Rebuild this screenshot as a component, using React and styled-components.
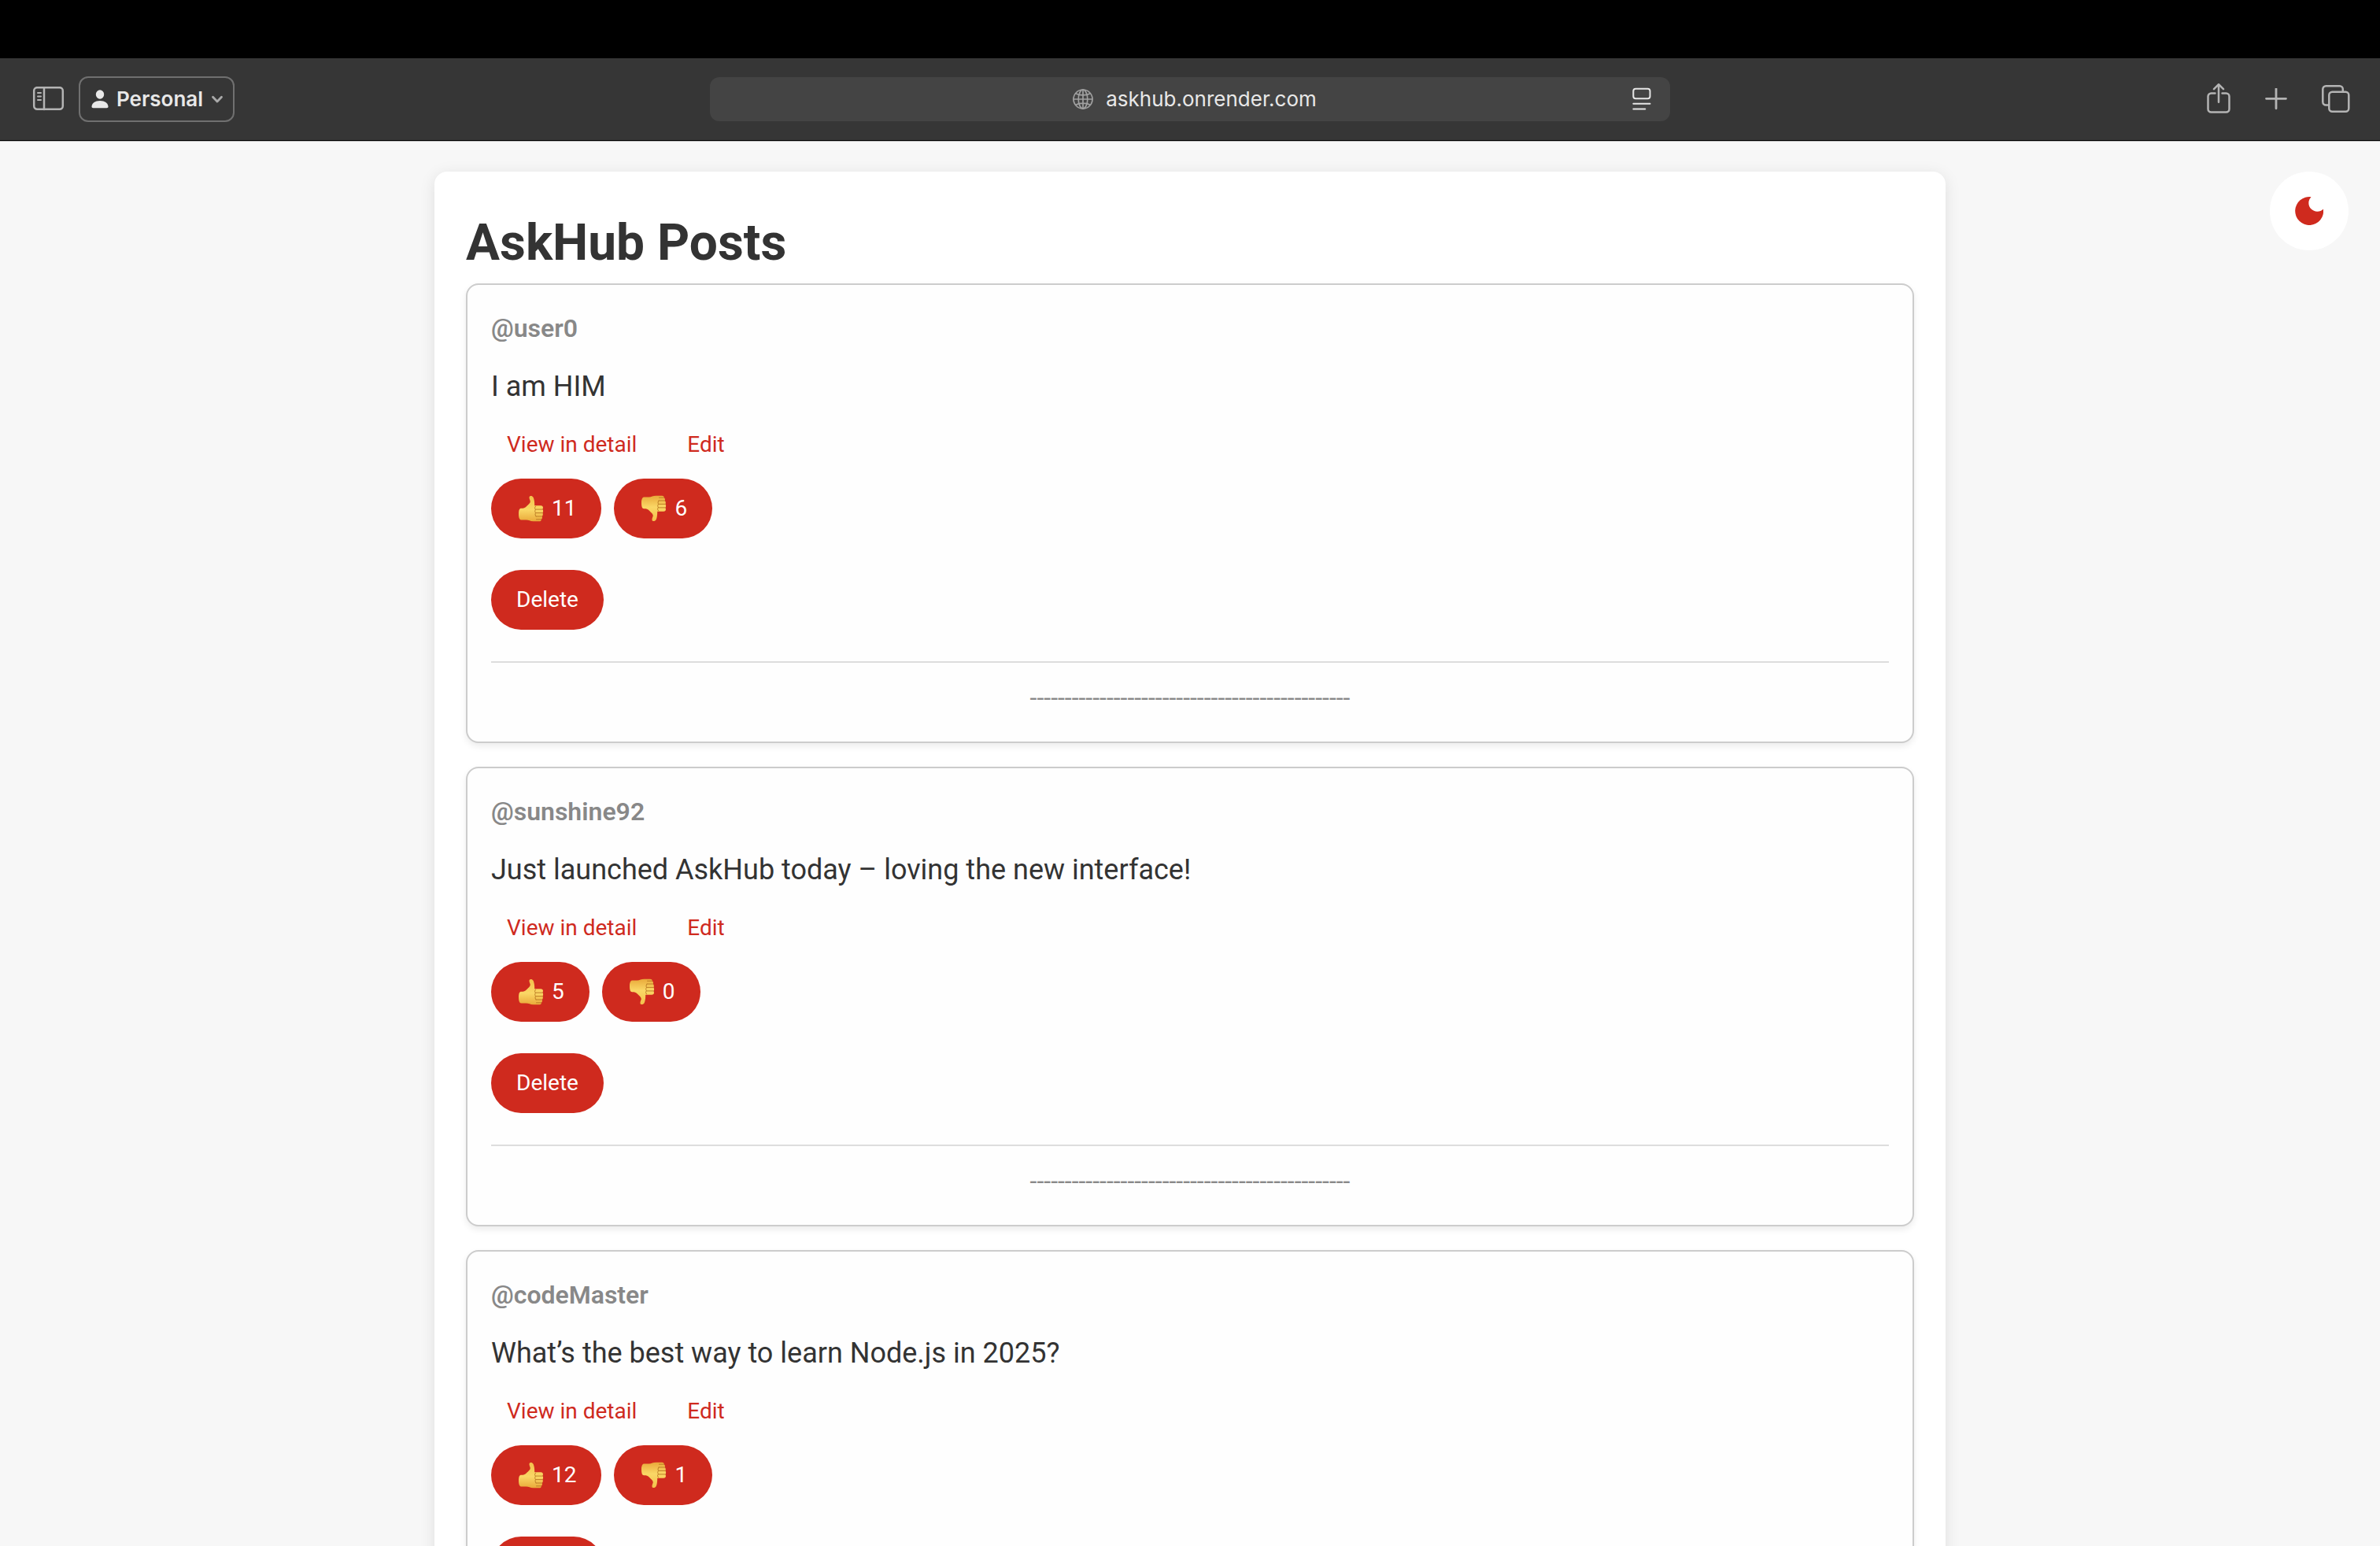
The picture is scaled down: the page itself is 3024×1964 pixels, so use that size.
import React from "react";
import styled, { createGlobalStyle } from "styled-components";

const GlobalStyle = createGlobalStyle`
  *, *::before, *::after { box-sizing: border-box; }
  body {
    margin: 0;
    background: #f7f7f7;
    color: #333;
    font-family: Roboto, "Liberation Sans", sans-serif;
    font-size: 32px;
    line-height: 1.6;
  }
`;

const Browser = styled.div`
  display: flex;
  flex-direction: column;
  height: 100vh;
  overflow: hidden;
`;

const MenuStrip = styled.div`
  flex: none;
  height: 74px;
  background: #000;
`;

const Toolbar = styled.header`
  flex: none;
  display: grid;
  grid-template-columns: 1fr minmax(0, 1220px) 1fr;
  align-items: center;
  height: 105px;
  padding: 0 38px;
  background: #363636;
  border-bottom: 1px solid #000;
  font-family: Inter, "Liberation Sans", sans-serif;
`;

const ToolGroup = styled.div`
  display: flex;
  align-items: center;
  gap: ${(p) => p.$gap}px;
  justify-content: ${(p) => (p.$end ? "flex-end" : "flex-start")};
`;

const IconButton = styled.button`
  display: flex;
  padding: 0;
  border: 0;
  background: none;
  color: ${(p) => (p.$bright ? "#e6e6e6" : "#b4b4b4")};
`;

const ProfileButton = styled.button`
  display: flex;
  align-items: center;
  gap: 10px;
  height: 58px;
  padding: 0 12px 0 14px;
  border: 2px solid #707070;
  border-radius: 12px;
  background: none;
  color: #e8e8e8;
  font: 600 26px/32px Inter, "Liberation Sans", sans-serif;
`;

const AddressBar = styled.div`
  display: flex;
  align-items: center;
  height: 56px;
  padding: 0 24px 0 60px;
  border-radius: 12px;
  background: #444;
  color: #a0a0a0;
`;

const Address = styled.label`
  flex: 1;
  display: flex;
  align-items: center;
  justify-content: center;
  gap: 16px;
`;

const AddressInput = styled.input`
  field-sizing: content;
  padding: 0;
  border: 0;
  outline: 0;
  background: none;
  color: #e8e8e8;
  font: 400 26px/32px Inter, "Liberation Sans", sans-serif;
`;

const Viewport = styled.div`
  position: relative;
  flex: 1;
  min-height: 0;
  border-top: 1px solid #c4c4c4;
`;

const Scroller = styled.div`
  height: 100%;
  padding: 38px 40px;
  overflow-y: auto;
  scrollbar-width: none;
`;

const ThemeToggle = styled.button`
  position: absolute;
  top: 38px;
  right: 40px;
  display: flex;
  align-items: center;
  justify-content: center;
  width: 100px;
  height: 100px;
  padding: 0;
  border: 0;
  border-radius: 50%;
  background: #fff;
`;

const Container = styled.main`
  max-width: 1920px;
  margin: 0 auto;
  padding: 40px;
  border-radius: 16px;
  background: #fff;
  box-shadow: 0 4px 20px rgba(0, 0, 0, 0.1);
`;

const Title = styled.h1`
  margin: 0;
  font-size: 64px;
  line-height: 102px;
  font-weight: 700;
`;

const Post = styled.article`
  display: flex;
  flex-direction: column;
  margin-bottom: 30px;
  padding: 30px;
  border: 2px solid #ccc;
  border-radius: 16px;
  background: #fefefe;
  box-shadow: 0 4px 8px rgba(0, 0, 0, 0.08);
`;

const Username = styled.h2`
  margin: 0 0 20px;
  color: #888;
  font-size: 32px;
  line-height: 50px;
  font-weight: 600;
`;

const Message = styled.p`
  margin: 0 0 22px;
  font-size: 36px;
  line-height: 58px;
`;

const Links = styled.nav`
  display: flex;
  gap: 24px;
  margin-bottom: 20px;
`;

const PostLink = styled.a`
  padding: 0 20px;
  color: #cf2a1e;
  font-size: 28px;
  line-height: 46px;
  text-decoration: none;
`;

const Votes = styled.div`
  display: flex;
  gap: 16px;
  margin-bottom: 40px;
`;

const Pill = styled.button`
  display: flex;
  align-items: center;
  align-self: flex-start;
  gap: 9px;
  height: 76px;
  padding: 0 32px;
  border: 0;
  border-radius: 38px;
  background: #cf2a1e;
  color: #fff;
  font: 400 28px/32px Roboto, "Liberation Sans", sans-serif;
`;

const Rule = styled.hr`
  width: 100%;
  height: 2px;
  margin: 40px 0 18px;
  border: 0;
  background: #ddd;
`;

const Dashes = styled.p`
  margin: 0;
  color: #888;
  line-height: 52px;
  text-align: center;
`;

const Stroke = ({ w, h, sw = 2.5, children }) => (
  <svg width={w} height={h} viewBox={`0 0 ${w} ${h}`} fill="none" stroke="currentColor" strokeWidth={sw} strokeLinecap="round" strokeLinejoin="round" aria-hidden="true">
    {children}
  </svg>
);

const SidebarIcon = () => (
  <Stroke w={48} h={32}>
    <rect x="5.2" y="1.2" width="36.6" height="27.6" rx="4" />
    <path d="M18 1v28" />
    <path d="M10 8h4M10 12.500h4M10 17h4" strokeWidth="2" />
  </Stroke>
);

const PersonIcon = () => (
  <svg width="22" height="24" viewBox="0 0 22 24" fill="currentColor" aria-hidden="true">
    <ellipse cx="11" cy="6" rx="5.200" ry="5.800" />
    <path d="M0.500 21.500C0.500 17 5 14 11 14s10.500 3 10.500 7.500c0 1.200-.7 1.700-2 1.700h-17c-1.300 0-2-.5-2-1.700z" />
  </svg>
);

const ChevronIcon = () => (
  <Stroke w={16} h={12} sw={2.8}>
    <path d="M2.500 3.200L8 9l5.500-5.800" stroke="#aaa" />
  </Stroke>
);

const GlobeIcon = () => (
  <Stroke w={26} h={26} sw={1.7}>
    <circle cx="13" cy="13" r="12" />
    <ellipse cx="13" cy="13" rx="5.800" ry="12" />
    <path d="M13 1v24M1 13h24M3.800 5.800C8.500 8.600 17.500 8.600 22.200 5.800M3.800 20.200C8.500 17.400 17.500 17.400 22.200 20.200" />
  </Stroke>
);

const ReaderIcon = () => (
  <Stroke w={24} h={30} sw={2}>
    <rect x="1.300" y="1.700" width="21.200" height="12.500" rx="3" />
    <path d="M1.300 20.700h21.200M1.300 27.500h15" />
  </Stroke>
);

const ShareIcon = () => (
  <Stroke w={30} h={40}>
    <path d="M10.500 12.500H5.500a4 4 0 0 0-4 4v16a4 4 0 0 0 4 4h19a4 4 0 0 0 4-4v-16a4 4 0 0 0-4-4h-5" />
    <path d="M15 23.700V1.700M9 7.200l6-6 6 6" />
  </Stroke>
);

const PlusIcon = () => (
  <Stroke w={28} h={28} sw={2.8}>
    <path d="M14 0.800v25M1.500 13.300h25" />
  </Stroke>
);

const TabsIcon = () => (
  <Stroke w={36} h={36}>
    <rect x="9.300" y="8.700" width="25" height="25" rx="4" />
    <path d="M8.500 25.500H5.300a4 4 0 0 1-4-4v-16.200a4 4 0 0 1 4-4h17.500a4 4 0 0 1 4 4v2.500" />
  </Stroke>
);

const MoonIcon = () => (
  <svg width="36" height="36" viewBox="0 0 36 36" aria-hidden="true">
    <path fill="#cf2a1e" d="M20.500 0.200A18 18 0 1 0 36 15.500A10.800 10.800 0 1 1 20.500 0.200z" />
  </svg>
);

const ThumbArt = ({ id }) => (
  <>
    <defs>
      <linearGradient id={id} x1="0" y1="0" x2="0" y2="1">
        <stop offset="0" stopColor="#f3c04b" />
        <stop offset="0.550" stopColor="#fad766" />
        <stop offset="1" stopColor="#e9a93a" />
      </linearGradient>
    </defs>
    <path
      fill={`url(#${id})`}
      d="M16.500 3.500C16.700 1.500 20.300 1.200 21.700 4C22.700 6.300 23.200 9.500 23.200 14.300H31C33.300 14.300 34.300 15.800 33.900 17.600C33.700 18.600 33.200 19 33.200 19C34.500 20 34.400 22.600 33.300 23.500C34.200 24.500 34 27 32.700 28C33.300 29 33 31 31.700 31.700C32 33.300 30.800 34.300 29 34.300H21.500C17.500 34.300 16 32.600 12.500 32.600H6.500C4.300 32.600 3 30 3 25.500C3 20 4 17.800 6.200 17.800C9.500 17.800 11 17.500 13 15.300C15.700 12.500 18.200 10.800 17.700 8.500C17.300 6.500 16.300 5.500 16.500 3.500z"
    />
    <path
      fill="none"
      stroke="#bd7e27"
      strokeWidth="1"
      strokeLinecap="round"
      d="M24.500 19.100H33M24.500 23.600H33M25 28H32.500M25.500 31.800H31.500M24.500 15.200c-1.300 1.500-1.300 3 0 3.900c-1 1.500-1 3.200 0 4.500c-.7 1.500-.6 3 .5 4.400"
    />
  </>
);

const ThumbIcon = ({ id, down }) => (
  <svg width="36" height="36" viewBox="0 0 36 36" aria-hidden="true">
    <g transform={down ? "matrix(1 0 0 -1 0 36)" : undefined}>
      <ThumbArt id={id} />
    </g>
  </svg>
);

const posts = [
  { user: "user0", text: "I am HIM", up: 11, down: 6 },
  { user: "sunshine92", text: "Just launched AskHub today – loving the new interface!", up: 5, down: 0 },
  { user: "codeMaster", text: "What’s the best way to learn Node.js in 2025?", up: 12, down: 1 },
];

const PostCard = ({ post }) => (
  <Post>
    <Username>@{post.user}</Username>
    <Message>{post.text}</Message>
    <Links>
      <PostLink href="#detail">View in detail</PostLink>
      <PostLink href="#edit">Edit</PostLink>
    </Links>
    <Votes>
      <Pill type="button">
        <ThumbIcon id={`up-${post.user}`} />
        {post.up}
      </Pill>
      <Pill type="button">
        <ThumbIcon id={`down-${post.user}`} down />
        {post.down}
      </Pill>
    </Votes>
    <Pill type="button">Delete</Pill>
    <Rule />
    <Dashes>{"-".repeat(46)}</Dashes>
  </Post>
);

export default function App() {
  return (
    <Browser>
      <GlobalStyle />
      <MenuStrip />
      <Toolbar>
        <ToolGroup $gap={14}>
          <IconButton type="button" aria-label="Sidebar">
            <SidebarIcon />
          </IconButton>
          <ProfileButton type="button">
            <PersonIcon />
            Personal
            <ChevronIcon />
          </ProfileButton>
        </ToolGroup>
        <AddressBar>
          <Address>
            <GlobeIcon />
            <AddressInput type="text" aria-label="Address" defaultValue="askhub.onrender.com" />
          </Address>
          <IconButton type="button" $bright aria-label="Reader">
            <ReaderIcon />
          </IconButton>
        </AddressBar>
        <ToolGroup $gap={44} $end>
          <IconButton type="button" aria-label="Share">
            <ShareIcon />
          </IconButton>
          <IconButton type="button" aria-label="New tab">
            <PlusIcon />
          </IconButton>
          <IconButton type="button" aria-label="Tab overview">
            <TabsIcon />
          </IconButton>
        </ToolGroup>
      </Toolbar>
      <Viewport>
        <Scroller>
          <Container>
            <Title>AskHub Posts</Title>
            {posts.map((post) => (
              <PostCard key={post.user} post={post} />
            ))}
          </Container>
        </Scroller>
        <ThemeToggle type="button" aria-label="Toggle dark mode">
          <MoonIcon />
        </ThemeToggle>
      </Viewport>
    </Browser>
  );
}
